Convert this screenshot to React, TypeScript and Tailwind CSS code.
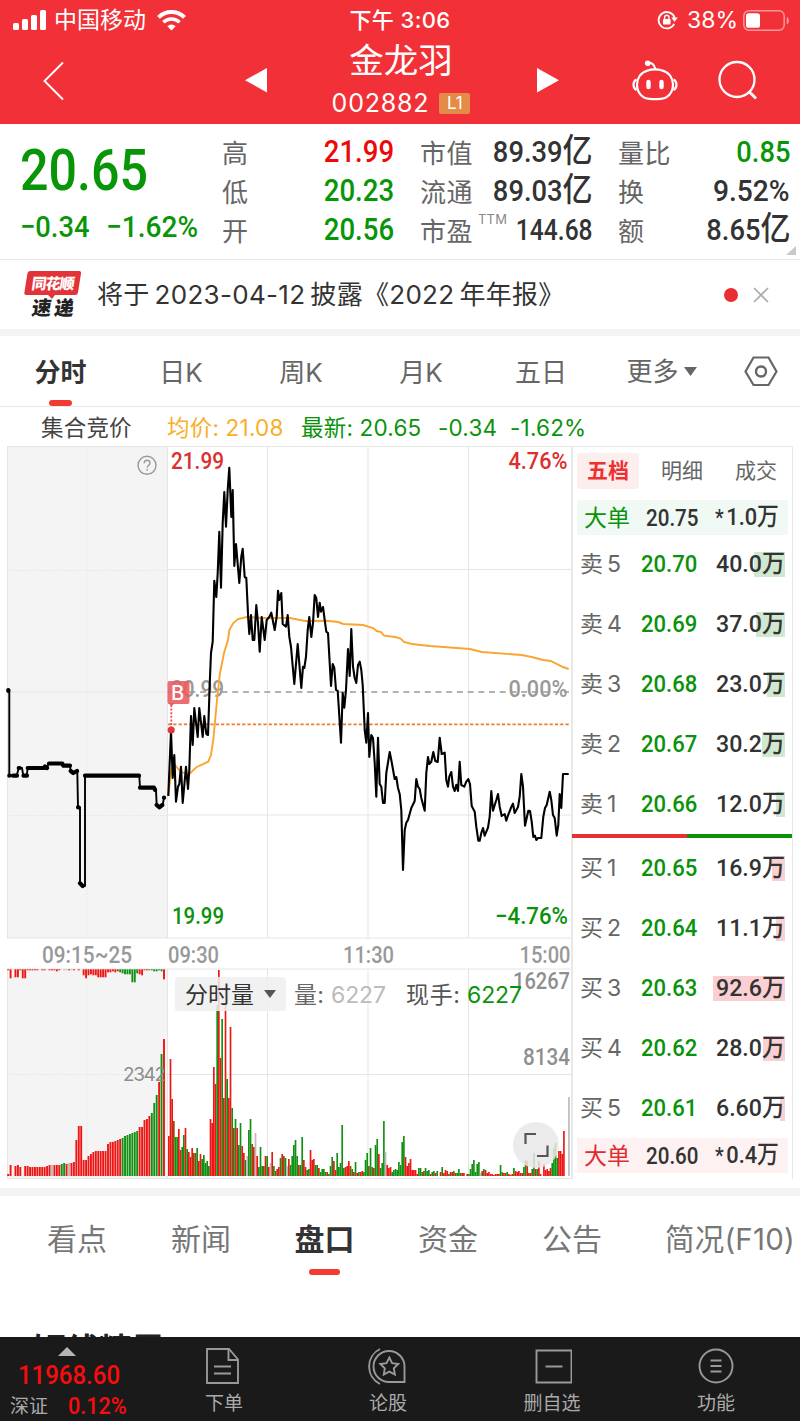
import type { ReactNode } from "react";
import clsx from "clsx";

// Stock detail page: quote header, intraday chart, order book

const quoteRows = [
  ["高", "21.99", "up", "市值", "89.39亿", "量比", "0.85"],
  ["低", "20.23", "down", "流通", "89.03亿", "换", "9.52%"],
  ["开", "20.56", "down", "市盈", "144.68", "额", "8.65亿"],
];

const asks = [
  { label: "卖5", price: "20.70", qty: "40.0万", volume: 40 },
  { label: "卖4", price: "20.69", qty: "37.0万", volume: 37 },
  { label: "卖3", price: "20.68", qty: "23.0万", volume: 23 },
  { label: "卖2", price: "20.67", qty: "30.2万", volume: 30.2 },
  { label: "卖1", price: "20.66", qty: "12.0万", volume: 12 },
];

const bids = [
  { label: "买1", price: "20.65", qty: "16.9万", volume: 16.9 },
  { label: "买2", price: "20.64", qty: "11.1万", volume: 11.1 },
  { label: "买3", price: "20.63", qty: "92.6万", volume: 92.6 },
  { label: "买4", price: "20.62", qty: "28.0万", volume: 28 },
  { label: "买5", price: "20.61", qty: "6.60万", volume: 6.6 },
];

const maxVolume = 92.6;

const pricePoints =
  "168.3,796 171,731 172.7,778 174.3,755 176,801.7 178,786.7 179.3,784 181,766.7 182.7,803 186,766.7 188,789 189.3,770 191,716 192.7,745 194.3,708 197.7,737 199.3,708 202.7,737 204.3,716 206.3,734 208,735 210,677 211,653 212.7,641.7 214.3,580.7 216.3,597 217.7,573 219.3,531.7 221,587.7 222.7,523 224.3,492 226,526.7 227.7,490 229.3,467.7 231.3,517 232.7,490 234.3,566 236,544 239.3,583 241.3,556.7 242.7,548.7 244.7,577 246.3,578 248.3,620 249.3,634 251,615 252.7,640 254.3,640 256.3,605 258,623 259.7,651.7 261.7,617 264.7,640 266.7,620 269.3,617 271.3,612.7 274.7,630 276.7,616.7 278,590.7 279.3,600 281.3,593 282.7,624 286,626.7 287.7,615 289.3,636.7 291,647 294.3,684 297.7,644 301.3,688 303,666.7 304.3,668 306,656.7 307.7,630 309.3,617 311.3,637 313,623 314.7,595 316.3,598 318,617 319.7,602.7 321,611.7 323,607 324.7,620 326.3,631.7 328,633 331,686 332.7,664 334.3,668 336,690 337.7,690.7 341,742.7 342.7,693 344.3,707.7 346,690 348,649 349.7,676 351.3,629 353,666.7 354.7,678 356.3,683 358,665 359.7,661.7 361.3,670 362.7,685 364.7,730 366.3,742.7 368,713 369.3,757 371.3,735 373,738 374.7,763 376.3,796.7 378,737.7 379.7,784 381.3,786.7 383,803 384.7,803 386.3,773 389.7,752 391.3,760 394.7,779 396.3,777 398,788 399.7,794 401.3,810 403,870 404.7,830 406.3,822.7 408,820 411.3,808 414.7,801 416.3,779 418,786.7 419.7,789 421.3,798 424.7,810.7 426.3,773 428,757 429.3,764 431.3,761.7 433.3,752 435.3,761 437.7,762 439.7,737.7 441.7,754 444.7,752.7 446.3,780 448,786.7 449.3,776.7 451.3,772 453,786.7 454.7,791 456.3,784.7 458,791 459.7,761.7 461.3,785 464.3,786.7 466.3,781.7 468.3,779 470,784 471.7,806 474.7,811.7 476.3,826.7 478.3,840.7 479.7,840.7 481.3,833 483,828 484.7,835.7 488,827.7 489.7,816.7 491.3,791 493,810.7 496.3,800 498,794 499.7,806.7 501.7,816 504.7,814 506.3,820.7 508,815.3 511.3,807 513,803.7 514.7,813 518,807 519.7,796.7 521.3,774 523,786.7 525,825.7 528.3,810.7 530,811 531.7,821.7 533.3,837 535,835.7 536.3,840 538,838 541.3,838 543.3,816.7 545,808 546.7,805 549.7,791.7 551.3,800 553,815 554.7,818 556.7,835.7 558.3,825 559.7,794 561.3,808 563,774 568.7,774";

const averagePoints =
  "168.3,795 171.7,768 174.3,764 178.3,769 183,772.7 189.3,774 196.7,767 208.3,761.7 211,755 213.3,740 216.7,703 220,673 224,653 228,640 229.3,630 233.3,623 238,619 246.7,617 263,618 290,618 305,621 326.7,620.7 338.3,622 343.3,624 363,625 373,628 376.7,631 381,632 384,635.7 395,637 400.7,638.7 404,642 411.7,644 430,646 470,649 481.7,652 521.7,655 531.7,657 543,660 550.7,661 563,667 568.7,669";

// One bar per minute: colour key (r up, g down, o mixed, x flat) + height
const minuteVolume =
  "r40 r117 r77 o55 g39 g39 r47 r26 g29 g41 r48 g27 r24 r19 r28 o23 o23 g28 r15 r22 g17 g21 g13 g15 g10 r57 r53 r109 r92 g171 r206 r118 g157 o78 r172 g97 r78 r149 g68 r48 g57 r48 g31 g53 r30 r23 g16 x20 g46 g57 o32 r29 x43 r20 g9 g29 g10 o10 r20 g20 r9 x13 r24 g10 g5 r7 r9 g18 r22 o20 g18 x10 r17 g11 g20 g31 g36 g20 r11 g11 g39 r16 r9 g6 g7 r26 r16 r17 g11 g11 r8 g4 g7 g7 g4 r4 g2 g10 g19 r15 r6 g23 g9 g13 g51 g8 r9 r10 r15 o10 g7 r4 g14 r3 g4 r4 r5 g4 g16 g23 o10 g28 g9 r8 g31 g37 r22 g8 g13 g55 x24 r11 r8 r9 g4 g6 g7 g6 g14 g11 g34 g40 r19 r10 r13 r17 r6 r6 r6 r2 g8 g8 g4 r5 g8 g5 g6 r2 g4 g5 r3 g5 r0 r4 g9 r3 r6 r5 g2 r4 r4 g5 r3 g3 g7 g3 r3 r3 r0 r2 g2 g7 g12 g16 g4 g12 g14 x3 r5 g7 r6 r3 r4 r2 r2 r1 r2 r2 r2 g11 g4 r3 r3 g4 r2 r1 r2 g8 r5 r4 r5 r3 r3 g9 g16 r15 r3 r3 g7 g23 r7 g7 r15 r2 r0 r12 r6 r7 r5 r8 g13 g28 g33 g18 r25 r25 r22 r45 r0 r0 x79".split(
    " "
  );

const auctionVolume =
  "r2 r11 r0 r10 r11 r9 r0 r10 r10 r9 r9 r9 r9 r9 r9 r9 r10 r11 x11 r11 r11 r11 g12 g13 r12 x13 r13 r14 r36 r50 r50 r16 r16 r20 r22 r24 r25 r25 r25 r25 r25 r32 r34 r34 r35 r36 r37 g38 g40 g41 g42 g43 g44 g45 r49 r49 r56 r57 r60 g63 g73 g81 r94 g122 r137".split(
    " "
  );

const unmatchedVolume =
  "r1 r9 r0 r8 r8 r1 r9 r9 r1 r1 r1 r1 r1 r0 r1 r1 r0 r1 r1 r1 r2 r1 r0 x1 x1 r1 x1 r1 r0 r1 r0 r6 r9 r6 r5 r6 r6 r8 r8 r8 r8 r3 r3 r2 r3 r2 g3 g4 g5 g5 g5 g13 g13 g4 r5 r6 r1 r1 g1 g1 g2 g2 g1 g2 r10".split(
    " "
  );

const barFill: Record<string, string> = {
  r: "#ee1614",
  g: "#119111",
  o: "#86500d",
  x: "#bbbbbb",
};

function Num({ children, className }: { children: ReactNode; className?: string }) {
  return (
    <span
      className={clsx(
        "inline-block whitespace-nowrap font-['Roboto','Noto_Sans_CJK_SC',sans-serif] font-medium",
        className
      )}
    >
      {children}
    </span>
  );
}

// 亿 is set a little larger than the digits before it
function Amount({ value, className }: { value: string; className?: string }) {
  const isYi = value.endsWith("亿");
  return (
    <Num className={clsx("origin-right text-[30px] leading-[35px]", className)}>
      {isYi ? value.slice(0, -1) : value}
      {isYi && <span className="text-[33px] leading-[30px]">亿</span>}
    </Num>
  );
}

function StatusBar() {
  return (
    <div className="grid h-10 grid-cols-3 items-center pl-[13px] pr-[10px]">
      <div className="flex items-center">
        <svg width="33" height="20" viewBox="0 0 33 20" fill="white">
          <rect x="0" y="13" width="6" height="7" rx="1.5" />
          <rect x="9" y="9" width="6" height="11" rx="1.5" />
          <rect x="18" y="5" width="6" height="15" rx="1.5" />
          <rect x="27" y="0" width="6" height="20" rx="1.5" />
        </svg>
        <span className="ml-2 text-[23px] leading-none">中国移动</span>
        <svg className="ml-[11px]" width="29" height="21" viewBox="0 0 29 21" fill="none" stroke="white">
          <path d="M1.5 7.4a18.4 18.4 0 0 1 26 0" strokeWidth="4" />
          <path d="M6.4 12.3a11.5 11.5 0 0 1 16.2 0" strokeWidth="3.6" />
          <path d="M14.5 20.5l-4.2-4.3a6 6 0 0 1 8.4 0z" fill="white" stroke="none" />
        </svg>
      </div>
      <div className="pr-[3px] text-center text-[22px] font-medium leading-none tracking-[0.4px]">下午 3:06</div>
      <div className="flex items-center justify-end">
        <svg width="21" height="20" viewBox="0 0 21 20" fill="none" stroke="white" strokeWidth="1.8">
          <path d="M17.2 13.8A8.2 8.2 0 1 1 17.7 8" />
          <path d="M14.3 7.5h6.4l-3.1 4.4z" fill="white" stroke="none" />
          <rect x="6" y="9" width="7.6" height="5.6" rx="0.8" fill="white" stroke="none" />
          <path d="M7.6 9.5V7.4a2.2 2.2 0 0 1 4.4 0v2.1" strokeWidth="1.4" />
        </svg>
        <span className="ml-[9px] text-[23px] leading-none">38%</span>
        <svg className="ml-[5px]" width="47" height="21" viewBox="0 0 47 21" fill="none">
          <rect x="0.8" y="0.8" width="40.4" height="19.4" rx="5.2" stroke="#f9979b" strokeWidth="1.5" />
          <rect x="3" y="3.2" width="14" height="14.6" rx="2.6" fill="white" />
          <path d="M43.7 7v7.4c3-1 3-6.4 0-7.4z" fill="#f9979b" />
        </svg>
      </div>
    </div>
  );
}

function NavBar() {
  return (
    <div className="flex h-[84px] items-start pl-[43px]">
      <svg className="mt-[21px]" width="22" height="40" viewBox="0 0 22 40" fill="none" stroke="white" strokeWidth="1.9">
        <path d="M20 1.5L1.5 20 20 38.5" />
      </svg>
      <svg className="ml-[180px] mt-[28px]" width="22" height="25" viewBox="0 0 22 25" fill="white">
        <path d="M22 0v24.5L0 12.2z" />
      </svg>
      <div className="w-[270px] pr-[2px] text-center">
        <div className="h-[41px] text-[34.5px] leading-[41px]">金龙羽</div>
        <div className="mt-[8px] flex h-[28px] items-center justify-center gap-[10px]">
          <span className="text-[25px] leading-none tracking-[0.8px]">002882</span>
          <span className="h-[21px] w-[31px] rounded-[2px] bg-[#e48b47] text-[17px] leading-[21px]">L1</span>
        </div>
      </div>
      <svg className="mt-[28px]" width="22" height="25" viewBox="0 0 22 25" fill="white">
        <path d="M0 0v24.5L22 12.2z" />
      </svg>
      <svg className="ml-[73px] mt-[19px]" width="46" height="43" viewBox="0 0 46 43" fill="none" stroke="white" strokeWidth="2.2">
        <path d="M16 11.4C19 9.9 26.5 9.9 30 11.4 37 13.2 41 19 41 25.5 41 34 35.5 39.4 28.5 39.9a80 80 0 0 1-11 0C10.5 39.4 5 34 5 25.5 5 19 9 13.2 16 11.4z" />
        <path d="M15.5 3.8c3.5-.6 7 1.7 7.8 6.2" />
        <circle cx="15.7" cy="4.2" r="2.8" fill="white" stroke="none" />
        <path d="M4.5 20.5c-4 2-4 8.5 0 10.5M41.5 20.5c4 2 4 8.5 0 10.5" />
        <path d="M16.5 23v5M29.5 23v5" strokeWidth="4.4" strokeLinecap="round" />
      </svg>
      <svg className="ml-[40px] mt-[20px]" width="40" height="41" viewBox="0 0 40 41" fill="none" stroke="white" strokeWidth="2.3">
        <circle cx="19" cy="19.5" r="17.5" />
        <path d="M31.5 32l6.5 6.5" strokeWidth="2.8" />
      </svg>
    </div>
  );
}

function QuoteSummary() {
  return (
    <section className="relative flex h-[136px] border-b border-[#e6e6e6] pt-[9px] text-[#333]">
      <div className="w-[222px] pl-[20px] text-[#089608]">
        <div className="h-[74px]">
          <Num className="origin-left scale-x-[0.865] text-[58px] leading-[74px]">20.65</Num>
        </div>
        <div className="flex h-[39px]">
          <Num className="w-[86px] origin-left scale-x-[0.91] text-[30px] leading-[39px]">−0.34</Num>
          <Num className="origin-left scale-x-[0.935] text-[30px] leading-[39px]">−1.62%</Num>
        </div>
      </div>
      <div>
        {quoteRows.map(([l1, v1, tone, l2, v2, l3, v3], i) => (
          <div key={l1} className="flex h-[39px] items-center">
            <span className="w-[71px] pt-[2px] text-[26px] leading-none text-[#666]">{l1}</span>
            <div className={clsx("flex w-[101px] justify-end", tone === "up" ? "text-[#ee0808]" : "text-[#089608]")}>
              <Num className="origin-right scale-x-[0.89] text-[31px] leading-[35px] -mt-[3px]">{v1}</Num>
            </div>
            <div className="ml-[26px] flex w-[56px] pt-[2px] text-[26px] leading-none tracking-[0.5px] text-[#666]">{l2}</div>
            <div className="flex w-[117px] items-start justify-end">
              {i === 2 && <span className="-mr-[8px] -mt-[1px] text-[13px] leading-none tracking-wide text-[#888]">TTM</span>}
              <Amount value={v2} className={clsx("-mt-[2px]", i === 2 ? "scale-x-[0.82]" : "scale-x-[0.91]")} />
            </div>
            <span className="ml-[25px] w-[61px] pt-[2px] text-[26px] leading-none tracking-[0.5px] text-[#666]">{l3}</span>
            <div className={clsx("flex w-[111px] justify-end", i === 0 && "text-[#089608]")}>
              <Amount value={v3} className={clsx("-mt-[2px]", i === 1 ? "scale-x-[0.94]" : "scale-x-[0.91]")} />
            </div>
          </div>
        ))}
      </div>
      <svg className="absolute right-1 bottom-[4px]" width="10" height="9" fill="#c9c9c9">
        <path d="M10 0v9H0z" />
      </svg>
    </section>
  );
}

function NewsStrip() {
  return (
    <section className="flex h-[69px] items-center pl-[24px]">
      <svg width="58" height="50" viewBox="0 0 58 50">
        <path d="M6 1h49q2.5 0 2 2.5l-3 19q-.4 2.5-3 2.5H31l-3 4-4-4H2.5Q0 25 .4 22.5L3.4 3.5Q3.7 1 6 1z" fill="#e23338" />
        <g fontFamily="'Noto Sans CJK SC', sans-serif" fontWeight="900">
          <text transform="translate(7 18.5) skewX(-8)" fontSize="15" fill="white" textLength="43">同花顺</text>
          <text transform="translate(7 44.5) skewX(-8)" fontSize="19.5" fill="#222" textLength="42">速递</text>
        </g>
      </svg>
      <p className="ml-[15px] flex w-[627px] gap-[5px] whitespace-nowrap text-[26px] leading-none tracking-[0.3px] text-[#333]">
        <span>将于</span>
        <span>2023-04-12</span>
        <span>披露《2022</span>
        <span>年年报》</span>
      </p>
      <span className="size-[14px] rounded-full bg-[#e83033]" />
      <svg className="ml-[15px]" width="16" height="16" stroke="#aaa" strokeWidth="1.7">
        <path d="M1 1l14 14M15 1L1 15" />
      </svg>
    </section>
  );
}

function PeriodTabs() {
  return (
    <nav className="flex h-[71px] border-b border-[#e8e8e8] text-[26px] leading-[73px] text-[#666]">
      <div className="flex w-[121px] flex-col items-center font-bold text-[#333]">
        <span className="h-[64px]">分时</span>
        <span className="h-[6px] w-[23px] rounded-full bg-[#f23a33]" />
      </div>
      {["日K", "周K", "月K", "五日"].map((tab) => (
        <span key={tab} className="w-[120px] text-center">
          {tab}
        </span>
      ))}
      <span className="flex w-[121px] items-center justify-center gap-[5px]">
        更多
        <svg width="13" height="9" fill="#666">
          <path d="M0 0h13L6.5 9z" />
        </svg>
      </span>
      <svg className="ml-[22px] mt-[20px]" width="34" height="31" viewBox="0 0 34 31" fill="none" stroke="#666" strokeWidth="2.2">
        <path d="M9.5 1.5h15L32.5 15.5l-8 13.5h-15L1.5 15.5z" />
        <circle cx="17" cy="15.5" r="5" strokeWidth="2.4" />
      </svg>
    </nav>
  );
}

function ChartLabel({ x, y, width, color, size = 24, children }: { x: number; y: number; width: number; color: string; size?: number; children: string }) {
  return (
    <text x={x} y={y} fontSize={size} fill={color} textLength={width} lengthAdjust="spacingAndGlyphs" fontFamily="Roboto, sans-serif" fontWeight="500">
      {children}
    </text>
  );
}

function IntradayChart() {
  return (
    <svg className="block overflow-visible" width="571" height="741" viewBox="0 446 571 741">
      {/* Auction session backdrop */}
      <path d="M7 446h160v492H7zM7 969h160v210H7z" fill="#f4f4f4" />
      <g fill="none" stroke="#e5e5e5">
        <path d="M7 446.5h564M167.5 446v492M267.5 446v492M368 446v492M468.5 446v492M167 569.5h404M167 815h404M7 938h564M7.5 446v492M7 692h160" />
        <path d="M7 969h564M167.5 969v210M267.5 969v210M368 969v210M468.5 969v210M167 1074.5h404M7 1178.5h564M7.5 969v210" />
        <path d="M87 446v492M87 969v210M7 570.5h160M7 815.5h160M7 1074.5h160" strokeDasharray="1.5 1.5" />
      </g>
      <path d="M168 692h401" stroke="#999" strokeWidth="1.3" strokeDasharray="6 4.7" />
      <path d="M168 724.3h401" stroke="#f07a2c" strokeWidth="1.8" strokeDasharray="3.2 2.1" />

      <ChartLabel x={171} y={469} width={53} color="#dd2e30">21.99</ChartLabel>
      <ChartLabel x={508.5} y={469} width={59} color="#dd2e30">4.76%</ChartLabel>
      <ChartLabel x={171} y={697} width={53} color="#999">20.99</ChartLabel>
      <ChartLabel x={508.5} y={697} width={59} color="#999">0.00%</ChartLabel>
      <ChartLabel x={172} y={924} width={52} color="#0b920b">19.99</ChartLabel>
      <ChartLabel x={495} y={924} width={73} color="#0b920b">−4.76%</ChartLabel>

      <polyline points={averagePoints} fill="none" stroke="#f9a530" strokeWidth="1.9" />
      <polyline points={pricePoints} fill="none" stroke="black" strokeWidth="2.1" strokeLinejoin="round" />

      {/* Auction price steps */}
      <g fill="none" stroke="black" strokeLinejoin="round" strokeLinecap="round">
        <path
          strokeWidth="1.9"
          d="M8.3 690h1v85.7h7.4l2-7.7h3.3l1.3 7.7h3.4l1-7.7h16.3l.7-2 2 2 2.3-4.7h13.3l1 2.4h6.7l.7 5.3 2.6 1.7 4-1.7.7 36.3h2v76l2.7 2.7H85V775.7h54.3l.7 12h14l2 3 .7 14.3 2.6 2.3 3.4-2.3 1.3-7.3"
        />
        <path
          strokeWidth="4.2"
          d="M8.3 690v1M9.3 775.7h.1M13 775.7h4M18.7 768h1M23.5 775.7h3.5M27.7 768H44l1-1.5 2 1.5M49 763.5h13.3l1 2.2H70M70.7 771l2.6 2 3.7-2M78 807.3h.5M80 883.3l2.7 2.7M85 775.7h54M140 787.7h14l1 2M156.7 805l2.6 2.3 3-2.3M164 797.7h.1"
        />
      </g>

      {/* Buy marker */}
      <path d="M171.3 705v25" stroke="#ea4d54" strokeWidth="1.8" strokeDasharray="2 1.6" />
      <circle cx="171.2" cy="730" r="3.6" fill="#dc3a40" />
      <rect x="167.5" y="681" width="22" height="23" rx="2" fill="#eb5a5e" fillOpacity="0.88" />
      <path d="M168 703h7l-3.5 3z" fill="#eb5a5e" />
      <text x="171" y="699.5" fontSize="20" fill="white" fontFamily="Inter, sans-serif" fontWeight="500">B</text>

      <g fill="none" stroke="#999" strokeWidth="1.4">
        <circle cx="147" cy="465.3" r="9" />
        <path d="M144.2 463.3c0-4 5.8-4 5.8-.4 0 2.3-2.8 2.3-2.8 4.8M147.2 469v1.7" />
      </g>

      <ChartLabel x={42} y={963} width={90} color="#999">09:15~25</ChartLabel>
      <ChartLabel x={168} y={963} width={51} color="#999">09:30</ChartLabel>
      <ChartLabel x={343} y={963} width={51} color="#999">11:30</ChartLabel>
      <ChartLabel x={519.5} y={963} width={51} color="#999">15:00</ChartLabel>

      {/* Volume */}
      {unmatchedVolume.map((v, i) => (
        <rect key={i} x={7.2 + i * 2.435} y={969.3} width={1.9} height={Number(v.slice(1))} fill={barFill[v[0]]} />
      ))}
      {auctionVolume.map((v, i) => (
        <rect key={i} x={7.2 + i * 2.435} y={1176 - Number(v.slice(1))} width={1.9} height={Number(v.slice(1))} fill={barFill[v[0]]} />
      ))}
      {minuteVolume.map((v, i) => (
        <rect key={i} x={168 + i * 1.667} y={1176 - Number(v.slice(1))} width={1.667} height={Number(v.slice(1))} fill={barFill[v[0]]} />
      ))}

      <text x="123" y="1081" fontSize="19" textLength="43" fill="#8c8c8c" fontFamily="Inter, sans-serif">2342</text>
      <ChartLabel x={513} y={989} width={57} color="#8f8f8f">16267</ChartLabel>
      <ChartLabel x={523} y={1065} width={47} color="#8f8f8f">8134</ChartLabel>

      {/* Volume indicator picker */}
      <rect x="175" y="977" width="111" height="34" rx="3" fill="#efefef" fillOpacity="0.85" />
      <path d="M264 990h12l-6 8z" fill="#555" />
      <g fontFamily="Inter, 'Noto Sans CJK SC', sans-serif" fontSize="23">
        <text x="185" y="1003" fill="#333" textLength="69">分时量</text>
        <text x="294" y="1003" fill="#666" textLength="30">量:</text>
        <text x="331" y="1003" fill="#bbb" textLength="55">6227</text>
        <text x="406" y="1003" fill="#555" textLength="54">现手:</text>
        <text x="467" y="1003" fill="#0b920b" textLength="55">6227</text>
      </g>

      <circle cx="536" cy="1145" r="23" fill="#e8e8e8" fillOpacity="0.85" />
      <path d="M525.5 1144v-10H536M547.5 1145.5V1156H537" fill="none" stroke="#555" strokeWidth="2.2" />
    </svg>
  );
}

function BookRow({ label, price, qty, volume, side }: { label: string; price: string; qty: string; volume: number; side: "ask" | "bid" }) {
  return (
    <div className="flex h-[60px] items-center pl-[7px]">
      <span className="w-[61px] pt-px text-[23px] leading-none text-[#666]">
        {label[0]}
        <span className="ml-[4px]">{label[1]}</span>
      </span>
      <Num className="w-[63px] origin-left scale-x-[0.9] text-[24.5px] leading-[30px] text-[#0b920b]">{price}</Num>
      <div className="relative w-[81px] text-right text-[#333]">
        <span
          className={clsx("absolute top-[3px] right-0 h-[25px]", side === "ask" ? "bg-[#cfe8cf]" : "bg-[#fad0d2]")}
          style={{ width: (volume / maxVolume) * 72 }}
        />
        <Num className="relative origin-right scale-x-[0.945] text-[24.5px] leading-[30px]">{qty}</Num>
      </div>
    </div>
  );
}

function BlockTrade({ price, qty, className }: { price: string; qty: string; className: string }) {
  return (
    <div className={clsx("ml-[4px] flex h-[35px] w-[211px] items-center pl-[7px]", className)}>
      <span className="w-[62px] pt-px text-[23px] leading-none">大单</span>
      <Num className="w-[56px] origin-left scale-x-[0.84] text-[24.5px] leading-[30px] text-[#333]">{price}</Num>
      <div className="w-[77px] text-right text-[#333]">
        <Num className="origin-right scale-x-[0.89] text-[24.5px] leading-[30px]">
          <span className="mr-[3px] text-[22px]">*</span>
          {qty}
        </Num>
      </div>
    </div>
  );
}

function OrderBook() {
  return (
    <aside className="h-[733px] w-[222px] border-t border-r border-l-2 border-[#e8e8e8]">
      <div className="flex h-[53px] pt-[6px] pl-[4px] text-[21px] leading-[35px] text-[#666]">
        <span className="h-[36px] w-[62px] rounded-[3px] bg-[#fdeeee] text-center font-bold text-[#ef3030]">五档</span>
        <span className="ml-[22px] w-[74px]">明细</span>
        <span>成交</span>
      </div>
      <BlockTrade price="20.75" qty="1.0万" className="bg-[#f0f9f4] text-[#0b920b]" />
      <div className="-mt-[1px]">
        {asks.map((row) => (
          <BookRow key={row.label} {...row} side="ask" />
        ))}
      </div>
      <div className="-ml-px flex h-[4px]">
        <span className="w-[115px] bg-[#e83033]" />
        <span className="flex-1 bg-[#0b920b]" />
      </div>
      {bids.map((row) => (
        <BookRow key={row.label} {...row} side="bid" />
      ))}
      <BlockTrade price="20.60" qty="0.4万" className="bg-[#fdf1f1] text-[#e22b2e]" />
    </aside>
  );
}

function DetailTabs() {
  return (
    <nav className="flex h-[84px] pl-[15px] text-[30px] leading-[86px] text-[#777]">
      {["看点", "新闻", "盘口", "资金", "公告"].map((tab) =>
        tab === "盘口" ? (
          <div key={tab} className="flex w-[123px] flex-col items-center font-bold text-[#333]">
            <span className="h-[73px]">{tab}</span>
            <span className="h-[6px] w-[31px] rounded-full bg-[#f23a33]" />
          </div>
        ) : (
          <span key={tab} className="w-[124px] text-center">
            {tab}
          </span>
        )
      )}
      <span className="ml-[31px] whitespace-nowrap text-[29.5px] tracking-[0.2px]">简况(F10)</span>
    </nav>
  );
}

const actions = [
  {
    label: "下单",
    icon: (
      <>
        <path d="M3 1h22l9 10.5V35H3z" />
        <path d="M24.5 1v11H34M10 18.5h17M10 25.5h17" />
      </>
    ),
  },
  {
    label: "论股",
    icon: (
      <>
        <path d="M21 3a15.5 15.5 0 0 1 15.5 15.5V34H21a15.5 15.5 0 0 1 0-31z" />
        <path d="M12 1a19.5 19.5 0 0 0 0 35M21.3 9.5l2.8 5.6 6.2.9-4.5 4.4 1.1 6.2-5.6-3-5.5 3 1-6.2-4.5-4.4 6.2-.9z" />
      </>
    ),
  },
  {
    label: "删自选",
    icon: <path d="M4.5 2.5h35v32h-35zM13.5 18.5h17" />,
  },
  {
    label: "功能",
    icon: (
      <>
        <circle cx="20" cy="18" r="16.5" />
        <path d="M14.5 12.5h11M14.5 18h11M14.5 23.5h11" />
      </>
    ),
  },
];

function BottomBar() {
  return (
    <footer className="flex h-[84px] bg-[#1a1a1a] text-[#aaa]">
      <div className="w-[142px] pl-[10px]">
        <svg className="mt-[10px] ml-[48px]" width="18" height="9" fill="#b5b5b5">
          <path d="M9 0l9 9H0z" />
        </svg>
        <div className="flex h-[38px] items-center pl-[8px]">
          <Num className="origin-left scale-x-[0.94] text-[25.5px] leading-[24px] text-[#f80c0c]">11968.60</Num>
        </div>
        <div className="flex h-[25px] items-center">
          <span className="w-[58px] text-[19px] leading-none">深证</span>
          <Num className="origin-left scale-x-[0.94] text-[23px] leading-[24px] text-[#f80c0c]">0.12%</Num>
        </div>
      </div>
      {actions.map(({ label, icon }) => (
        <div key={label} className="flex w-[164px] flex-col items-center pt-[11px]">
          <svg width="40" height="38" viewBox="0 0 40 38" fill="none" stroke="#999" strokeWidth="1.9">
            {icon}
          </svg>
          <span className="mt-[8px] text-[19px] leading-[19px]">{label}</span>
        </div>
      ))}
    </footer>
  );
}

export default function App() {
  return (
    <div className="h-[1423px] w-[800px] overflow-hidden bg-white font-['Inter','Noto_Sans_CJK_SC',sans-serif]">
      <header className="h-[124px] bg-[#f23037] text-white">
        <StatusBar />
        <NavBar />
      </header>
      <QuoteSummary />
      <NewsStrip />
      <div className="h-[7px] bg-[#f4f4f4]" />
      <PeriodTabs />
      <div className="flex h-[39px] items-center whitespace-nowrap pt-[4px] text-[22.5px] leading-none tracking-[0.2px] text-[#0b920b]">
        <span className="w-[167px] pl-[41px] text-[#444]">集合竞价</span>
        <span className="w-[134px] text-[#f9ae28]">均价: 21.08</span>
        <span className="w-[137px]">最新: 20.65</span>
        <span className="w-[72px]">-0.34</span>
        <span>-1.62%</span>
      </div>
      <div className="flex h-[742px]">
        <IntradayChart />
        <OrderBook />
      </div>
      <div className="h-[8px] bg-[#f4f4f4]" />
      <DetailTabs />
      {/* Next section heading, mostly under the bottom bar */}
      <div className="h-[57px] overflow-hidden pt-[46px] pl-[33px] text-[33px] font-bold leading-[48px] text-[#222]">
        短线精灵
      </div>
      <BottomBar />
    </div>
  );
}
